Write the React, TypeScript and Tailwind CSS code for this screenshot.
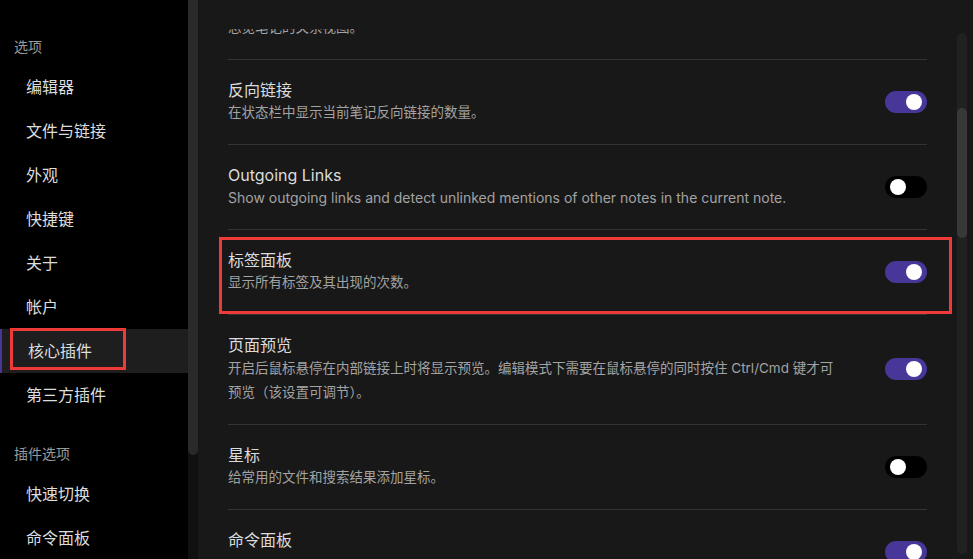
import React from "react";

type Plugin = {
  title: string;
  desc: string[];
  on: boolean;
  marked?: boolean;
  latin?: boolean;
};

const plugins: Plugin[] = [
  { title: "字数统计", desc: ["总览笔记的关系视图。"], on: true },
  { title: "反向链接", desc: ["在状态栏中显示当前笔记反向链接的数量。"], on: true },
  {
    title: "Outgoing Links",
    desc: ["Show outgoing links and detect unlinked mentions of other notes in the current note."],
    on: false,
    latin: true,
  },
  { title: "标签面板", desc: ["显示所有标签及其出现的次数。"], on: true, marked: true },
  {
    title: "页面预览",
    desc: [
      "开启后鼠标悬停在内部链接上时将显示预览。编辑模式下需要在鼠标悬停的同时按住 Ctrl/Cmd 键才可",
      "预览（该设置可调节）。",
    ],
    on: true,
  },
  { title: "星标", desc: ["给常用的文件和搜索结果添加星标。"], on: false },
  // description is below the fold, keep the line empty so the row keeps its height
  { title: "命令面板", desc: [""], on: true },
];

const navTop = ["编辑器", "文件与链接", "外观", "快捷键", "关于", "帐户", "核心插件", "第三方插件"];
const navPlugins = ["快速切换", "命令面板"];

function Toggle({ on }: { on: boolean }) {
  return (
    <div
      className={`flex h-[22px] w-[42px] shrink-0 items-center rounded-full px-[5px] ${
        on ? "justify-end bg-[#483699]" : "justify-start bg-black"
      }`}
    >
      <div className="h-4 w-4 rounded-full bg-white" />
    </div>
  );
}

function PluginRow({ p }: { p: Plugin }) {
  const multi = p.desc.length > 1;
  return (
    <div className="relative flex items-center border-b border-[#333333] pt-[19px] pb-[20px]">
      <div className="min-w-0 flex-1">
        <div className="h-[22px] text-[16px] leading-[22px] text-[#dcdcdc]">{p.title}</div>
        {p.desc.map((line, i) => (
          <div
            key={i}
            className={`whitespace-nowrap text-[#a3a3a3] ${multi ? "h-[24px] leading-[24px]" : "h-[23px] leading-[23px]"} ${
              p.latin ? "text-[14px]" : "text-[13.5px]"
            }`}
          >
            {line}
          </div>
        ))}
      </div>
      <Toggle on={p.on} />
      {p.marked && (
        <div className="pointer-events-none absolute top-[7px] bottom-0 -left-[9px] -right-[25px] border-[3px] border-[#ef3a3a]" />
      )}
    </div>
  );
}

function NavItem({ label, active }: { label: string; active?: boolean }) {
  return (
    <div
      className={`relative flex h-[44px] items-center pl-[26px] text-[16px] text-[#dcddde] ${
        active ? "border-l-2 border-[#483699] bg-[#1e1e1e] pl-[24px]" : ""
      }`}
    >
      {label}
      {active && (
        <div className="pointer-events-none absolute -top-px left-[8px] h-[42px] w-[116px] border-[3px] border-[#ef3a3a]" />
      )}
    </div>
  );
}

export default function App() {
  return (
    <div
      className="flex h-[559px] w-[973px] overflow-hidden bg-[#181818]"
      style={{ fontFamily: 'Inter, "Noto Sans CJK SC", sans-serif' }}
    >
      {/* sidebar */}
      <aside className="w-[188px] shrink-0 bg-black pt-[10px]">
        <div className="pt-[27px] pb-[8px] pl-[14px] text-[14px] leading-[20px] text-[#999999]">选项</div>
        {navTop.map((n) => (
          <NavItem key={n} label={n} active={n === "核心插件"} />
        ))}
        <div className="pt-[27px] pb-[8px] pl-[14px] text-[14px] leading-[20px] text-[#999999]">插件选项</div>
        {navPlugins.map((n) => (
          <NavItem key={n} label={n} />
        ))}
      </aside>
      <div className="flex w-[10px] shrink-0 flex-col bg-[#101010]">
        <div className="h-[455px] rounded-b-full bg-[#2a2a2a]" />
      </div>

      {/* content */}
      <main className="flex flex-1">
        <div className="ml-[30px] mt-[29px] h-[530px] w-[699px] overflow-x-visible overflow-y-clip">
          <div className="-mt-[54px]">
            {plugins.map((p) => (
              <PluginRow key={p.title} p={p} />
            ))}
          </div>
        </div>
        <div className="ml-[30px] mt-[33px] h-[521px] w-[10px] rounded-full bg-[#212121] pt-[75px]">
          <div className="h-[130px] rounded-full bg-[#383838]" />
        </div>
      </main>
    </div>
  );
}
